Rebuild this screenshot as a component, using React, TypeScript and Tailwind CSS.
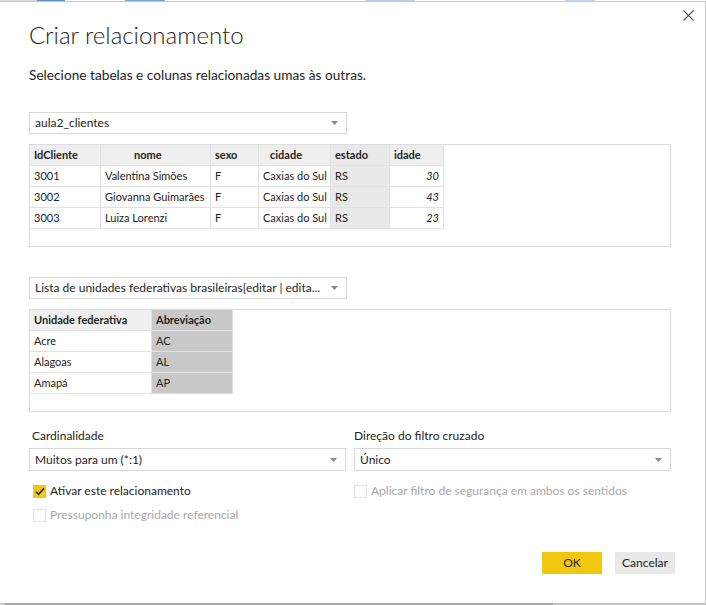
import React from 'react';

const clientes = [
    { id: '3001', nome: 'Valentina Simões', sexo: 'F', cidade: 'Caxias do Sul', estado: 'RS', idade: '30' },
    { id: '3002', nome: 'Giovanna Guimarães', sexo: 'F', cidade: 'Caxias do Sul', estado: 'RS', idade: '43' },
    { id: '3003', nome: 'Luiza Lorenzi', sexo: 'F', cidade: 'Caxias do Sul', estado: 'RS', idade: '23' },
];

const ufs = [
    { nome: 'Acre', sigla: 'AC' },
    { nome: 'Alagoas', sigla: 'AL' },
    { nome: 'Amapá', sigla: 'AP' },
];

function Caret() {
    return (
        <svg width="7" height="4" viewBox="0 0 7 4" className="shrink-0">
            <path d="M0 0h7L3.5 4z" fill="#8a8a8a" />
        </svg>
    );
}

function Dropdown({ value, className = '' }: { value: string; className?: string }) {
    return (
        <div className={`flex items-center justify-between border border-[#d8d8d8] bg-white pl-[5px] pr-[8px] text-[12px] text-[#252423] ${className}`}>
            <span className="whitespace-nowrap overflow-hidden">{value}</span>
            <Caret />
        </div>
    );
}

function Checkbox({ checked, disabled, label }: { checked?: boolean; disabled?: boolean; label: string }) {
    return (
        <div className="flex items-center gap-[4px]">
            {checked ? (
                <div className="w-[13px] h-[13px] bg-[#f2c80f] flex items-center justify-center">
                    <svg width="10" height="9" viewBox="0 0 10 9">
                        <path d="M1 4.8l2.6 2.6L9 1.4" fill="none" stroke="#252423" strokeWidth="1.6" />
                    </svg>
                </div>
            ) : (
                <div className="w-[13px] h-[13px] border border-[#e3e3e3] bg-white" />
            )}
            <span className={`text-[12px] ${disabled ? 'text-[#a8a8a8]' : 'text-[#252423]'}`}>{label}</span>
        </div>
    );
}

const th = 'h-[21px] border border-[#e2e2e2] px-[4px] font-bold text-[11px] text-[#252423] bg-[#efefef] text-left whitespace-nowrap';
const td = 'h-[21px] border border-[#e2e2e2] px-[4px] text-[11px] text-[#252423] whitespace-nowrap overflow-hidden';

export default function App() {
    return (
        <div className="w-[706px] h-[605px] flex flex-col bg-white font-['Lato',sans-serif] overflow-hidden">
            {/* faixa da janela de trás */}
            <div className="h-px flex shrink-0">
                <div className="w-[37px] bg-[#d9d9d9]" />
                <div className="w-[28px] bg-[#5b8fd0]" />
                <div className="w-[60px] bg-[#ffffff]" />
                <div className="w-[40px] bg-[#7aa5da]" />
                <div className="w-[200px] bg-[#ffffff]" />
                <div className="w-[50px] bg-[#b9cfea]" />
                <div className="w-[150px] bg-[#ffffff]" />
                <div className="w-[30px] bg-[#c3d6ee]" />
                <div className="flex-1 bg-[#ffffff]" />
            </div>

            <div className="relative flex-1 border-t border-r border-[#c9c9c9] pl-[29px] pr-[34px]">
                {/* fechar */}
                <svg className="absolute top-[8px] right-[11px]" width="11" height="11" viewBox="0 0 11 11">
                    <path d="M0.5 0.5l10 10M10.5 0.5l-10 10" stroke="#555" strokeWidth="1.1" />
                </svg>

                <h1 className="mt-[17px] text-[24px] leading-[32px] font-light text-[#252423]">Criar relacionamento</h1>
                <p className="mt-[16px] text-[13.7px] leading-[16px] text-[#252423]">
                    Selecione tabelas e colunas relacionadas umas às outras.
                </p>

                <Dropdown value="aula2_clientes" className="mt-[29px] w-[318px] h-[22px]" />

                <div className="mt-[10px] h-[103px] border border-[#dcdcdc] overflow-hidden">
                    <table className="border-collapse table-fixed w-[414px] -mt-px -ml-px">
                        <thead>
                            <tr>
                                <th className={`${th} w-[71px]`}>IdCliente</th>
                                <th className={`${th} w-[110px] !pl-[33px]`}>nome</th>
                                <th className={`${th} w-[48px]`}>sexo</th>
                                <th className={`${th} w-[72px] !pl-[11px]`}>cidade</th>
                                <th className={`${th} w-[59px] !bg-[#e9e9e9]`}>estado</th>
                                <th className={`${th} w-[54px]`}>idade</th>
                            </tr>
                        </thead>
                        <tbody>
                            {clientes.map((c) => (
                                <tr key={c.id}>
                                    <td className={td}>{c.id}</td>
                                    <td className={td}>{c.nome}</td>
                                    <td className={td}>{c.sexo}</td>
                                    <td className={td}>{c.cidade}</td>
                                    <td className={`${td} bg-[#e9e9e9]`}>{c.estado}</td>
                                    <td className={`${td} text-right italic`}>{c.idade}</td>
                                </tr>
                            ))}
                        </tbody>
                    </table>
                </div>

                <Dropdown
                    value="Lista de unidades federativas brasileiras[editar | edita..."
                    className="mt-[30px] w-[318px] h-[22px]"
                />

                <div className="mt-[10px] h-[103px] border border-[#dcdcdc] overflow-hidden">
                    <table className="border-collapse table-fixed w-[203px] -mt-px -ml-px">
                        <thead>
                            <tr>
                                <th className={`${th} w-[122px]`}>Unidade federativa</th>
                                <th className={`${th} w-[81px] !bg-[#c8c8c8]`}>Abreviação</th>
                            </tr>
                        </thead>
                        <tbody>
                            {ufs.map((u) => (
                                <tr key={u.sigla}>
                                    <td className={td}>{u.nome}</td>
                                    <td className={`${td} bg-[#c8c8c8]`}>{u.sigla}</td>
                                </tr>
                            ))}
                        </tbody>
                    </table>
                </div>

                <div className="mt-[16px] grid grid-cols-2 gap-x-[8px]">
                    <div className="flex flex-col">
                        <span className="pl-[3px] text-[12px] leading-[16px] text-[#252423]">Cardinalidade</span>
                        <Dropdown value="Muitos para um (*:1)" className="mt-[4px] h-[23px]" />
                        <div className="mt-[11px] pl-[4px]">
                            <Checkbox checked label="Ativar este relacionamento" />
                        </div>
                        <div className="mt-[6px] pl-[4px]">
                            <Checkbox disabled label="Pressuponha integridade referencial" />
                        </div>
                    </div>
                    <div className="flex flex-col">
                        <span className="text-[12px] leading-[16px] text-[#252423]">Direção do filtro cruzado</span>
                        <Dropdown value="Único" className="mt-[4px] h-[23px]" />
                        <div className="mt-[11px]">
                            <Checkbox disabled label="Aplicar filtro de segurança em ambos os sentidos" />
                        </div>
                    </div>
                </div>

                <div className="mt-[28px] flex justify-end gap-[13px]">
                    <button className="w-[60px] h-[22px] bg-[#f2c80f] text-[12px] text-[#252423]">OK</button>
                    <button className="w-[60px] h-[22px] bg-[#e9e9e9] text-[12px] text-[#252423] -mr-[4px]">Cancelar</button>
                </div>
            </div>

            {/* borda inferior */}
            <div className="h-[2px] shrink-0 flex">
                <div className="w-[5px] bg-[#c8c8c8]" />
                <div className="w-[548px] bg-[#a6a6a6]" />
                <div className="flex-1 bg-[#c4c4c4]" />
            </div>
        </div>
    );
}
